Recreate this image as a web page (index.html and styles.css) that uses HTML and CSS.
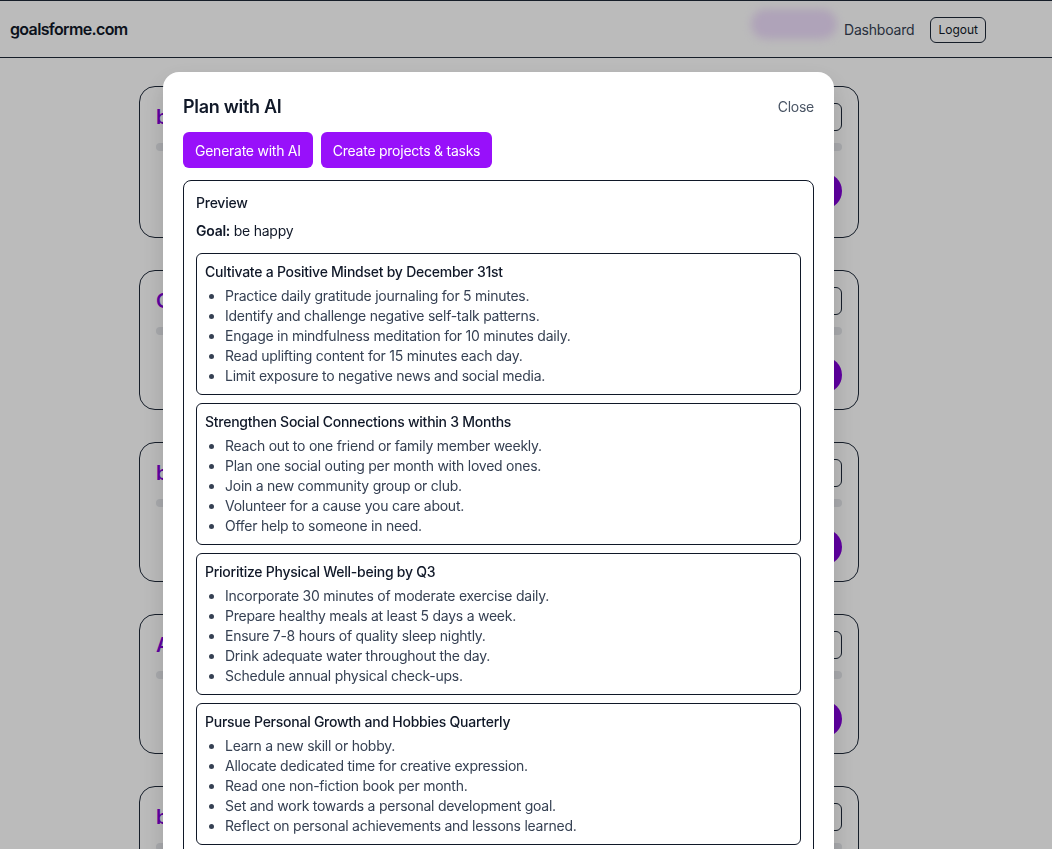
FILE: index.html
```html
<!DOCTYPE html>
<html lang="en">
<head>
<meta charset="utf-8">
<title>goalsforme.com</title>
<link rel="stylesheet" href="styles.css">
</head>
<body>
<header class="topbar">
  <div class="logo">goalsforme.com</div>
  <nav class="nav">
    <div class="pill"></div>
    <a class="nav-link" href="#">Dashboard</a>
    <button class="logout">Logout</button>
  </nav>
</header>

<main class="page">
  <div class="card-list">
    <section class="card card-tall">
      <div class="card-head"><h2 class="card-title">be happy</h2><button class="card-btn">Edit</button></div>
      <div class="bar"></div>
      <div class="card-foot"><span class="dot"></span></div>
    </section>
    <section class="card">
      <div class="card-head"><h2 class="card-title">Get fit</h2><button class="card-btn">Edit</button></div>
      <div class="bar"></div>
      <div class="card-foot"><span class="dot"></span></div>
    </section>
    <section class="card">
      <div class="card-head"><h2 class="card-title">be rich</h2><button class="card-btn">Edit</button></div>
      <div class="bar"></div>
      <div class="card-foot"><span class="dot"></span></div>
    </section>
    <section class="card">
      <div class="card-head"><h2 class="card-title">Always learn</h2><button class="card-btn">Edit</button></div>
      <div class="bar"></div>
      <div class="card-foot"><span class="dot"></span></div>
    </section>
    <section class="card">
      <div class="card-head"><h2 class="card-title">be kind</h2><button class="card-btn">Edit</button></div>
      <div class="bar"></div>
      <div class="card-foot"><span class="dot"></span></div>
    </section>
  </div>
</main>

<div class="overlay">
  <div class="modal">
    <div class="modal-head">
      <h1 class="modal-title">Plan with AI</h1>
      <button class="close">Close</button>
    </div>
    <div class="actions">
      <button class="btn">Generate with AI</button>
      <button class="btn">Create projects &amp; tasks</button>
    </div>
    <div class="preview">
      <div class="preview-label">Preview</div>
      <div class="goal"><strong>Goal:</strong> be happy</div>
      <div class="projects">
        <div class="project">
          <div class="project-title">Cultivate a Positive Mindset by December 31st</div>
          <ul class="tasks">
            <li>Practice daily gratitude journaling for 5 minutes.</li>
            <li>Identify and challenge negative self-talk patterns.</li>
            <li>Engage in mindfulness meditation for 10 minutes daily.</li>
            <li>Read uplifting content for 15 minutes each day.</li>
            <li>Limit exposure to negative news and social media.</li>
          </ul>
        </div>
        <div class="project">
          <div class="project-title">Strengthen Social Connections within 3 Months</div>
          <ul class="tasks">
            <li>Reach out to one friend or family member weekly.</li>
            <li>Plan one social outing per month with loved ones.</li>
            <li>Join a new community group or club.</li>
            <li>Volunteer for a cause you care about.</li>
            <li>Offer help to someone in need.</li>
          </ul>
        </div>
        <div class="project">
          <div class="project-title">Prioritize Physical Well-being by Q3</div>
          <ul class="tasks">
            <li>Incorporate 30 minutes of moderate exercise daily.</li>
            <li>Prepare healthy meals at least 5 days a week.</li>
            <li>Ensure 7-8 hours of quality sleep nightly.</li>
            <li>Drink adequate water throughout the day.</li>
            <li>Schedule annual physical check-ups.</li>
          </ul>
        </div>
        <div class="project">
          <div class="project-title">Pursue Personal Growth and Hobbies Quarterly</div>
          <ul class="tasks">
            <li>Learn a new skill or hobby.</li>
            <li>Allocate dedicated time for creative expression.</li>
            <li>Read one non-fiction book per month.</li>
            <li>Set and work towards a personal development goal.</li>
            <li>Reflect on personal achievements and lessons learned.</li>
          </ul>
        </div>
      </div>
    </div>
  </div>
</div>
</body>
</html>
```

FILE: styles.css
```css
* { box-sizing: border-box; }
html, body { overflow: hidden; }
body {
  margin: 0;
  font-family: Inter, "Noto Sans", "Liberation Sans", sans-serif;
  color: #101828;
  background: #ffffff;
  letter-spacing: -0.25px;
}
button { font-family: inherit; letter-spacing: inherit; }

.topbar {
  height: 58px;
  border-top: 1px solid #1e2939;
  border-bottom: 1px solid #1e2939;
  display: flex;
  align-items: center;
  justify-content: space-between;
  padding: 0 66px 0 10px;
  background: #fff;
}
.logo {
  font-size: 16px;
  font-weight: 600;
  color: #101828;
  letter-spacing: -0.65px;
}
.nav {
  display: flex;
  align-items: center;
  gap: 16px;
}
.pill {
  width: 86px;
  height: 30px;
  border-radius: 16px;
  background: #efdefc;
  filter: blur(4px);
  margin-right: -9px;
  margin-top: -10px;
}
.nav-link {
  font-size: 14px;
  color: #364153;
  text-decoration: none;
  letter-spacing: -0.2px;
}
.logout {
  font-size: 12px;
  line-height: 16px;
  padding: 4px 7px;
  border: 1px solid #1e2939;
  border-radius: 6px;
  background: #fff;
  color: #101828;
  margin-top: 1px;
  letter-spacing: 0;
}

.page {
  padding: 28px 54px 0 0;
}
.card-list {
  width: 720px;
  margin: 0 auto;
  display: flex;
  flex-direction: column;
  gap: 32px;
}
.card {
  border: 1px solid #1e2939;
  border-radius: 16px;
  padding: 16px;
  background: #fff;
}
.card-head {
  display: flex;
  justify-content: space-between;
  align-items: center;
  height: 28px;
}
.card-title {
  margin: 0;
  font-size: 20px;
  font-weight: 600;
  color: #8200db;
}
.card-btn {
  height: 28px;
  padding: 0 10px;
  font-size: 12px;
  border: 1px solid #1e2939;
  border-radius: 6px;
  background: #fff;
}
.bar {
  margin-top: 12px;
  height: 8px;
  border-radius: 4px;
  background: #e5e7eb;
}
.card-foot {
  margin-top: 22px;
  height: 36px;
  display: flex;
  justify-content: flex-end;
  align-items: flex-start;
}
.card-tall .card-foot { height: 48px; }
.dot {
  width: 36px;
  height: 36px;
  border-radius: 50%;
  background: #8200db;
}

.overlay {
  position: fixed;
  inset: 0;
  background: rgba(0, 0, 0, 0.265);
  display: flex;
  justify-content: center;
  align-items: flex-start;
  padding: 72px 55px 0 0;
  overflow: hidden;
}
.modal {
  width: 671px;
  background: #fff;
  border-radius: 16px;
  padding: 20px;
  display: flex;
  flex-direction: column;
  gap: 12px;
  box-shadow: 0 10px 25px rgba(0,0,0,0.15);
}
.modal-head {
  display: flex;
  justify-content: space-between;
  align-items: center;
  height: 28px;
}
.modal-title {
  margin: 0;
  font-size: 18px;
  font-weight: 600;
  color: #101828;
  letter-spacing: -0.3px;
}
.close {
  border: 0;
  background: none;
  padding: 0;
  font-size: 14px;
  color: #4a5565;
}
.actions {
  display: flex;
  gap: 8px;
}
.btn {
  height: 36px;
  padding: 0 12px;
  border: 0;
  border-radius: 6px;
  background: #9810fa;
  color: #fff;
  font-size: 14px;
}
.preview {
  border: 1px solid #101828;
  border-radius: 8px;
  padding: 12px;
  font-size: 14px;
  line-height: 20px;
}
.preview-label {
  font-weight: 500;
  color: #101828;
}
.goal {
  margin-top: 8px;
  color: #101828;
}
.goal strong { font-weight: 600; }
.projects {
  margin-top: 12px;
  display: flex;
  flex-direction: column;
  gap: 8px;
}
.project {
  border: 1px solid #101828;
  border-radius: 6px;
  padding: 8px;
}
.project-title {
  font-weight: 500;
  color: #101828;
}
.tasks {
  margin: 4px 0 0;
  padding-left: 20px;
  list-style: disc;
  color: #364153;
}
```
